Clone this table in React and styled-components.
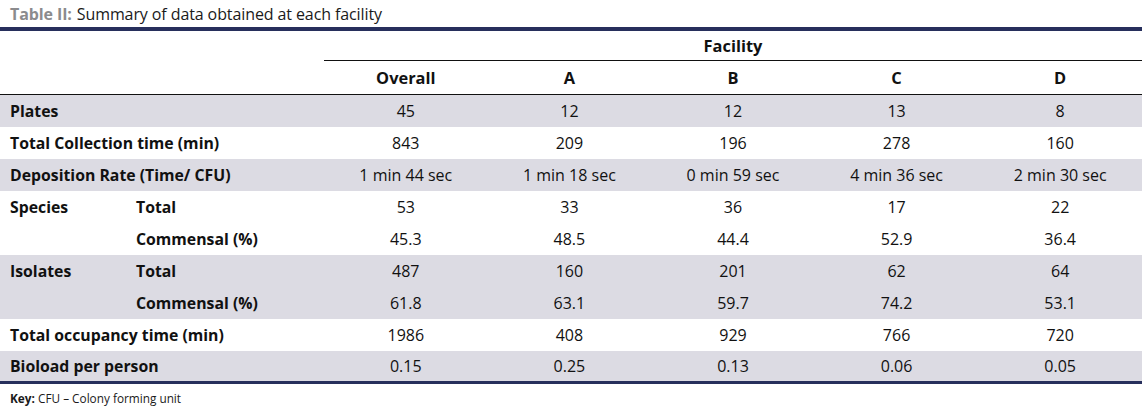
import React from "react";
import styled, { createGlobalStyle } from "styled-components";

const Global = createGlobalStyle`
  html, body { margin: 0; padding: 0; background: #ffffff; }
  body { font-family: "Open Sans", "Liberation Sans", sans-serif; color: #111111; }
`;

const Figure = styled.figure`
  margin: 0;
  width: 1142px;
`;

const Caption = styled.div`
  height: 27px;
  display: flex;
  align-items: center;
  padding-left: 10px;
  font-size: 16px;
  letter-spacing: -0.1px;
  color: #1a1a1a;
  box-sizing: border-box;
  padding-top: 1px;
`;

const CaptionLabel = styled.span`
  font-weight: 700;
  color: #8b8b8d;
  margin-right: 5px;
`;

const Table = styled.table`
  width: 1142px;
  border-collapse: collapse;
  table-layout: fixed;
  border-top: 4px solid #272f5c;
  border-bottom: 3px solid #272f5c;
  font-size: 16px;
`;

const HeadCell = styled.th`
  font-weight: 700;
  font-size: 16.4px;
  text-align: center;
  padding: 0;
  height: ${(p) => p.$h}px;
  border-bottom: ${(p) => (p.$rule ? "1.5px solid #111" : "none")};
  vertical-align: middle;
`;

const Row = styled.tr`
  background: ${(p) => (p.$shaded ? "#dcdbe3" : "#ffffff")};
  height: 32px;
`;

const Label = styled.td`
  font-weight: 700;
  font-size: 15.8px;
  padding: 0 0 0 10px;
  white-space: nowrap;
  vertical-align: middle;
`;

const Value = styled.td`
  text-align: center;
  padding: 0;
  vertical-align: middle;
`;

const Key = styled.div`
  padding: 6px 0 0 10px;
  font-size: 11.8px;
  color: #1a1a1a;
`;

const KeyLabel = styled.span`
  font-weight: 700;
`;

const cols = ["Overall", "A", "B", "C", "D"];

const rows = [
  { label: "Plates", values: ["45", "12", "12", "13", "8"], shaded: true },
  { label: "Total Collection time (min)", values: ["843", "209", "196", "278", "160"] },
  {
    label: "Deposition Rate (Time/ CFU)",
    values: ["1 min 44 sec", "1 min 18 sec", "0 min 59 sec", "4 min 36 sec", "2 min 30 sec"],
    shaded: true,
  },
  { label: "Species", sub: "Total", values: ["53", "33", "36", "17", "22"] },
  { label: "", sub: "Commensal (%)", values: ["45.3", "48.5", "44.4", "52.9", "36.4"] },
  { label: "Isolates", sub: "Total", values: ["487", "160", "201", "62", "64"], shaded: true },
  { label: "", sub: "Commensal (%)", values: ["61.8", "63.1", "59.7", "74.2", "53.1"], shaded: true },
  { label: "Total occupancy time (min)", values: ["1986", "408", "929", "766", "720"] },
  { label: "Bioload per person", values: ["0.15", "0.25", "0.13", "0.06", "0.05"], shaded: true },
];

export default function App() {
  return (
    <Figure>
      <Global />
      <Caption>
        <CaptionLabel>Table II:</CaptionLabel> Summary of data obtained at each facility
      </Caption>
      <Table>
        <colgroup>
          <col style={{ width: 126 }} />
          <col style={{ width: 198 }} />
          {cols.map((c) => (
            <col key={c} style={{ width: 163.6 }} />
          ))}
        </colgroup>
        <thead>
          <tr>
            <HeadCell colSpan={2} $h={29} />
            <HeadCell colSpan={5} $h={29} $rule>
              Facility
            </HeadCell>
          </tr>
          <tr>
            <HeadCell colSpan={2} $h={33} $rule />
            {cols.map((c) => (
              <HeadCell key={c} $h={33} $rule>
                {c}
              </HeadCell>
            ))}
          </tr>
        </thead>
        <tbody>
          {rows.map((r, i) => (
            <Row key={i} $shaded={r.shaded}>
              {r.sub !== undefined ? (
                <>
                  <Label>{r.label}</Label>
                  <Label>{r.sub}</Label>
                </>
              ) : (
                <Label colSpan={2}>{r.label}</Label>
              )}
              {r.values.map((v, j) => (
                <Value key={j}>{v}</Value>
              ))}
            </Row>
          ))}
        </tbody>
      </Table>
      <Key>
        <KeyLabel>Key:</KeyLabel> CFU – Colony forming unit
      </Key>
    </Figure>
  );
}
